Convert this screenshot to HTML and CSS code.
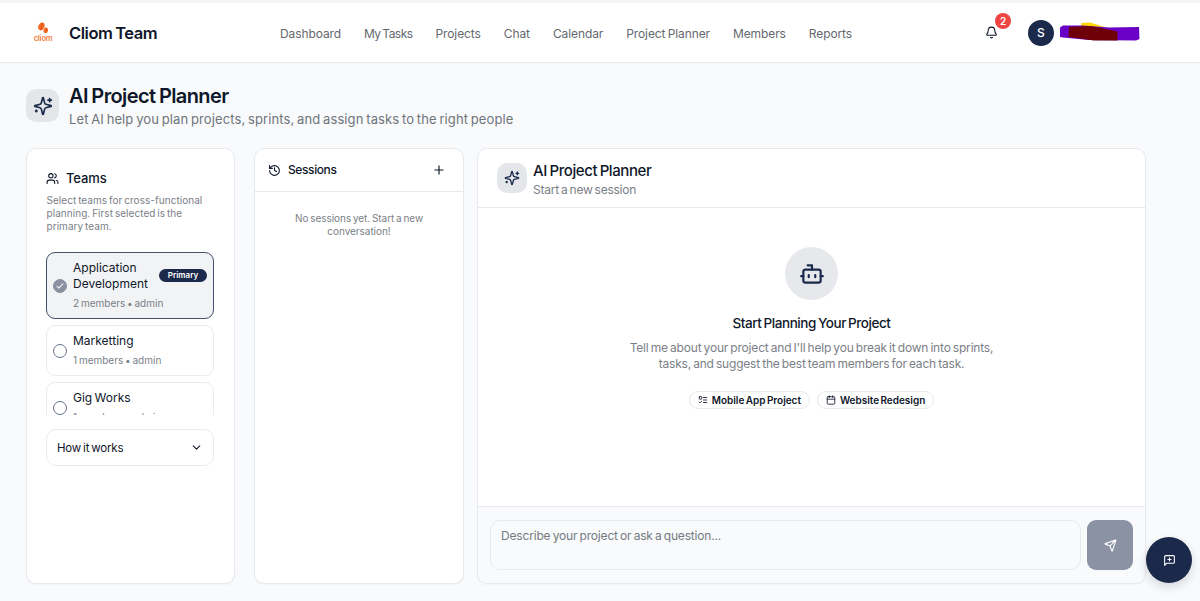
FILE: index.html
```html
<!DOCTYPE html>
<html lang="en">
<head>
    <meta charset="UTF-8">
    <meta name="viewport" content="width=device-width, initial-scale=1.0">
    <title>Cliom Team - AI Project Planner</title>
    <link rel="stylesheet" href="styles.css">
</head>
<body>
    <!-- icons used more than once -->
    <svg class="sprite" aria-hidden="true">
        <symbol id="sparkles" viewBox="0 0 24 24">
            <path d="M9.937 15.5A2 2 0 0 0 8.5 14.063l-6.135-1.582a.5.5 0 0 1 0-.962L8.5 9.936A2 2 0 0 0 9.937 8.5l1.582-6.135a.5.5 0 0 1 .963 0L14.063 8.5A2 2 0 0 0 15.5 9.937l6.135 1.581a.5.5 0 0 1 0 .964L15.5 14.063a2 2 0 0 0-1.437 1.437l-1.582 6.135a.5.5 0 0 1-.963 0z"/>
            <path d="M20 3v4M22 5h-4M4 17v2M5 18H3"/>
        </symbol>
    </svg>

    <header class="topbar">
        <div class="brand">
            <div class="logo">
                <svg class="logo-mark" viewBox="0 0 12 12">
                    <ellipse cx="4.4" cy="4.4" rx="3" ry="4" transform="rotate(25 4.4 4.4)"/>
                    <ellipse cx="8.8" cy="8.4" rx="2.2" ry="2.8" transform="rotate(15 8.8 8.4)"/>
                    <path d="M6 .8 3.4 8.2M9.6 6 8.2 11"/>
                </svg>
                <span class="logo-text">cliom</span>
            </div>
            <span class="brand-name">Cliom Team</span>
        </div>
        <nav class="nav">
            <a>Dashboard</a>
            <a class="nav-tasks">My Tasks</a>
            <a>Projects</a>
            <a>Chat</a>
            <a>Calendar</a>
            <a>Project Planner</a>
            <a>Members</a>
            <a>Reports</a>
        </nav>
        <div class="user">
            <div class="bell">
                <svg class="icon" viewBox="0 0 24 24"><path d="M10.268 21a2 2 0 0 0 3.464 0M3.262 15.326A1 1 0 0 0 4 17h16a1 1 0 0 0 .74-1.673C19.41 13.956 18 12.499 18 8A6 6 0 0 0 6 8c0 4.499-1.411 5.956-2.738 7.326"/></svg>
                <span class="bell-count">2</span>
            </div>
            <div class="avatar">S</div>
            <svg class="user-name" viewBox="0 0 82 20">
                <path d="M22 5 22.5 2 31 1.5 46 6 44 18 26 9z" fill="#ffd800"/>
                <path d="M1 6.5 4 4.5 24 4.5 50 6.5 80 6 80.5 18 77 19.5 30 19 4 16.500 1 16z" fill="#6a00c8"/>
                <path d="M10 6 31 5 47 8 58.500 10.500 58.500 19.500 35 19.500 9.500 16z" fill="#700008"/>
            </svg>
        </div>
    </header>

    <main class="page">
        <div class="page-head">
            <div class="icon-box"><svg class="icon"><use href="#sparkles"/></svg></div>
            <div>
                <h1>AI Project Planner</h1>
                <p class="page-sub">Let AI help you plan projects, sprints, and assign tasks to the right people</p>
            </div>
        </div>

        <div class="columns">
            <section class="card teams">
                <h2 class="teams-title">
                    <svg class="icon" viewBox="0 0 24 24"><path d="M16 21v-2a4 4 0 0 0-4-4H6a4 4 0 0 0-4 4v2M22 21v-2a4 4 0 0 0-3-3.870M16 3.130a4 4 0 0 1 0 7.750"/><circle cx="9" cy="7" r="4"/></svg>
                    Teams
                </h2>
                <p class="teams-desc">Select teams for cross-functional<br>planning. First selected is the<br>primary team.</p>
                <div class="team-list">
                    <div class="team selected">
                        <span class="radio"><svg viewBox="0 0 24 24"><path d="M20 6 9 17l-5-5"/></svg></span>
                        <div class="team-info">
                            <div class="team-name">Application Development</div>
                            <div class="team-meta">2 members • admin</div>
                        </div>
                        <span class="primary">Primary</span>
                    </div>
                    <div class="team">
                        <span class="radio"></span>
                        <div class="team-info">
                            <div class="team-name">Marketting</div>
                            <div class="team-meta">1 members • admin</div>
                        </div>
                    </div>
                    <div class="team">
                        <span class="radio"></span>
                        <div class="team-info">
                            <div class="team-name">Gig Works</div>
                            <div class="team-meta">1 members • admin</div>
                        </div>
                    </div>
                </div>
                <button class="how">
                    <span>How it works</span>
                    <svg class="icon" viewBox="0 0 24 24"><path d="m6 9 6 6 6-6"/></svg>
                </button>
            </section>

            <section class="card sessions">
                <div class="sessions-head">
                    <svg class="icon" viewBox="0 0 24 24"><path d="M3 12a9 9 0 1 0 9-9 9.750 9.750 0 0 0-6.740 2.740L3 8"/><path d="M3 3v5h5M12 7v5l4 2"/></svg>
                    <h2>Sessions</h2>
                    <svg class="icon plus" viewBox="0 0 24 24"><path d="M5 12h14M12 5v14"/></svg>
                </div>
                <p class="sessions-empty">No sessions yet. Start a new<br>conversation!</p>
            </section>

            <section class="card planner">
                <div class="planner-head">
                    <div class="icon-box small"><svg class="icon"><use href="#sparkles"/></svg></div>
                    <div class="planner-title">
                        <h2>AI Project Planner</h2>
                        <p>Start a new session</p>
                    </div>
                </div>
                <div class="planner-body">
                    <div class="bot">
                        <svg class="icon" viewBox="0 0 24 24"><path d="M12 8V4H8"/><rect x="4" y="8" width="16" height="12" rx="2"/><path d="M2 14h2M20 14h2M15 13v2M9 13v2"/></svg>
                    </div>
                    <h3>Start Planning Your Project</h3>
                    <p class="intro">Tell me about your project and I'll help you break it down into sprints,<br>tasks, and suggest the best team members for each task.</p>
                    <div class="chips">
                        <span class="chip">
                            <svg class="icon" viewBox="0 0 24 24"><rect x="3" y="4" width="6" height="6" rx="1"/><path d="m3 17 2 2 4-4M13 6h8M13 12h8M13 18h8"/></svg>
                            Mobile App Project
                        </span>
                        <span class="chip">
                            <svg class="icon" viewBox="0 0 24 24"><path d="M8 2v4M16 2v4M3 10h18"/><rect x="3" y="4" width="18" height="18" rx="2"/></svg>
                            Website Redesign
                        </span>
                    </div>
                </div>
                <div class="composer">
                    <textarea placeholder="Describe your project or ask a question..."></textarea>
                    <button class="send" aria-label="Send">
                        <svg class="icon" viewBox="0 0 24 24"><path d="M14.536 21.686a.5.5 0 0 0 .937-.024l6.500-19a.496.496 0 0 0-.635-.635l-19 6.500a.5.5 0 0 0-.024.937l7.930 3.180a2 2 0 0 1 1.112 1.110zM21.854 2.147l-10.940 10.939"/></svg>
                    </button>
                </div>
            </section>
        </div>
    </main>

    <button class="feedback" aria-label="Feedback">
        <svg class="icon" viewBox="0 0 24 24"><path d="M21 15a2 2 0 0 1-2 2H7l-4 4V5a2 2 0 0 1 2-2h14a2 2 0 0 1 2 2zM12 7v6M9 10h6"/></svg>
    </button>
</body>
</html>
```

FILE: styles.css
```css
* {
    box-sizing: border-box;
    margin: 0;
    padding: 0;
}

body {
    font-family: Inter, "Liberation Sans", sans-serif;
    word-spacing: -1px;
    height: 601px;
    overflow: hidden;
    background: #f8fafc;
    color: #0f172a;
    border-top: 3px solid #f5f5f6;
}

button,
textarea {
    font-family: inherit;
    word-spacing: inherit;
    color: inherit;
}

.sprite {
    display: none;
}

.icon {
    display: block;
    flex: none;
    width: 13px;
    height: 13px;
    fill: none;
    stroke: currentColor;
    stroke-width: 2;
    stroke-linecap: round;
    stroke-linejoin: round;
}

/* top bar */
.topbar {
    display: flex;
    align-items: center;
    height: 60px;
    padding-left: 33px;
    background: #fff;
    border-bottom: 1px solid #e8eaed;
}

.brand {
    display: flex;
    align-items: center;
    width: 247px;
}

.logo {
    display: flex;
    flex-direction: column;
    align-items: center;
    width: 20px;
    margin-right: 16px;
}

.logo-mark {
    width: 12px;
    height: 12px;
    fill: #f26a21;
}

.logo-mark path {
    fill: none;
    stroke: #d9480f;
    stroke-width: 0.6;
}

.logo-text {
    font-size: 7.5px;
    line-height: 9px;
    font-weight: 600;
    letter-spacing: -0.2px;
    color: #f4793b;
}

.brand-name {
    font-size: 16.5px;
    font-weight: 600;
    letter-spacing: -0.45px;
}

.nav {
    display: flex;
    gap: 23px;
    width: 699px;
    padding-top: 2px;
    font-size: 12px;
    letter-spacing: -0.1px;
    color: #64696f;
    white-space: nowrap;
}

.nav-tasks {
    letter-spacing: -0.55px;
}

.user {
    display: flex;
    align-items: center;
}

.bell {
    position: relative;
    width: 49px;
    padding-left: 6px;
}

.bell-count {
    position: absolute;
    top: -13px;
    left: 16px;
    width: 16px;
    height: 16px;
    border-radius: 50%;
    background: #ef4444;
    color: #fff;
    font-size: 10px;
    font-weight: 600;
    line-height: 16px;
    text-align: center;
}

.avatar {
    width: 26px;
    height: 26px;
    border-radius: 50%;
    background: #1b294b;
    color: #fff;
    font-size: 12px;
    font-weight: 500;
    line-height: 26px;
    text-align: center;
}

.user-name {
    width: 82px;
    height: 20px;
    margin: -3px 0 0 5px;
}

/* page heading */
.page {
    padding: 22px 54px 0 26px;
}

.page-head {
    display: flex;
    height: 63px;
    gap: 10px;
}

.icon-box {
    display: flex;
    align-items: center;
    justify-content: center;
    width: 33px;
    height: 33px;
    margin-top: 4px;
    border-radius: 10px;
    background: #e4e6ea;
    color: #1b294b;
}

.icon-box .icon {
    width: 20px;
    height: 20px;
}

h1 {
    font-size: 20px;
    line-height: 23px;
    font-weight: 600;
    letter-spacing: -0.6px;
}

.page-sub {
    margin-top: 2px;
    font-size: 13px;
    line-height: 18px;
    letter-spacing: 0.1px;
    color: #6f747b;
    white-space: nowrap;
}

/* columns */
.columns {
    display: grid;
    grid-template-columns: 209px 210px 1fr;
    height: 436px;
}

.card {
    background: #fff;
    border: 1px solid #e7e9ed;
    border-radius: 10px;
    box-shadow: 0 1px 2px rgba(15, 23, 42, 0.04);
    overflow: hidden;
}

.sessions {
    margin-left: 19px;
    margin-right: -19px;
}

.planner {
    display: flex;
    flex-direction: column;
    margin-left: 32px;
}

.teams {
    padding: 19px 20px 19px 19px;
}

.teams-title {
    display: flex;
    align-items: center;
    gap: 7px;
    height: 20px;
    font-size: 13px;
    font-weight: 500;
    letter-spacing: -0.1px;
}

.teams-desc {
    margin-top: 6px;
    padding-left: 0.5px;
    font-size: 10px;
    line-height: 13px;
    letter-spacing: 0.05px;
    color: #7b8087;
}

.team-list {
    height: 163px;
    margin-top: 19px;
    overflow: hidden;
}

.team {
    display: flex;
    align-items: center;
    height: 51px;
    margin-bottom: 6px;
    padding: 0 6px;
    border: 1px solid #e9ebef;
    border-radius: 9px;
}

.team.selected {
    height: 67px;
    background: #f2f3f5;
    border-color: #454f6b;
}

.radio {
    flex: none;
    width: 14px;
    height: 14px;
    margin-right: 6px;
    border: 1px solid #66708a;
    border-radius: 50%;
}

.selected .radio {
    background: #8b91a1;
    border-color: #8b91a1;
}

.radio svg {
    display: block;
    width: 10px;
    height: 10px;
    margin: 1px;
    fill: none;
    stroke: #fff;
    stroke-width: 2.5;
}

.team-info {
    flex: 1;
    min-width: 0;
    padding-bottom: 2px;
}

.team-name {
    font-size: 12px;
    line-height: 16px;
}

.team-meta {
    margin-top: 5px;
    font-size: 10px;
    line-height: 13px;
    color: #7b8087;
    white-space: nowrap;
}

.primary {
    flex: none;
    width: 48px;
    height: 13px;
    margin-bottom: 20px;
    border-radius: 7px;
    background: #1b294b;
    color: #fff;
    font-size: 8px;
    font-weight: 600;
    line-height: 13px;
    text-align: center;
}

.how {
    display: flex;
    align-items: center;
    justify-content: space-between;
    width: 168px;
    height: 37px;
    margin-top: 14px;
    padding: 0 10px;
    background: #fff;
    border: 1px solid #e9ebef;
    border-radius: 10px;
    font-size: 11.5px;
    letter-spacing: -0.2px;
}

/* sessions */
.sessions-head {
    display: flex;
    align-items: center;
    gap: 7px;
    height: 43px;
    padding: 0 17px 0 13px;
    border-bottom: 1px solid #e7e9ed;
}

.sessions-head h2 {
    flex: 1;
    padding-bottom: 1px;
    font-size: 12px;
    font-weight: 500;
    letter-spacing: -0.4px;
}

.sessions-head .plus {
    width: 14px;
    height: 14px;
}

.sessions-empty {
    margin-top: 20px;
    font-size: 10px;
    line-height: 13px;
    letter-spacing: -0.04px;
    text-align: center;
    color: #7b8087;
}

/* planner */
.planner-head {
    display: flex;
    align-items: center;
    gap: 6px;
    height: 59px;
    padding-left: 19px;
    border-bottom: 1px solid #e7e9ed;
}

.planner-title {
    padding-top: 3px;
}

.icon-box.small {
    width: 30px;
    height: 30px;
    margin: 0;
}

.small .icon {
    width: 16px;
    height: 16px;
}

.planner-head h2 {
    font-size: 15px;
    line-height: 19px;
    font-weight: 500;
    letter-spacing: -0.42px;
}

.planner-head p {
    margin-top: 1px;
    font-size: 12px;
    line-height: 18px;
    letter-spacing: -0.25px;
    color: #7b8087;
}

.planner-body {
    display: flex;
    flex-direction: column;
    align-items: center;
    height: 298px;
    padding-top: 39px;
}

.bot {
    display: flex;
    align-items: center;
    justify-content: center;
    width: 53px;
    height: 53px;
    border-radius: 50%;
    background: #e7e8ec;
    color: #1b294b;
}

.bot .icon {
    width: 26px;
    height: 26px;
}

h3 {
    margin-top: 13px;
    font-size: 13.5px;
    line-height: 20px;
    font-weight: 500;
    letter-spacing: -0.45px;
}

.intro {
    margin-top: 7px;
    font-size: 12px;
    line-height: 16px;
    letter-spacing: -0.19px;
    text-align: center;
    color: #7b8087;
    white-space: nowrap;
}

.chips {
    display: flex;
    gap: 7px;
    margin-top: 19px;
}

.chip {
    display: flex;
    align-items: center;
    gap: 4px;
    height: 18px;
    padding: 0 8px;
    border: 1px solid #e7e9ed;
    border-radius: 10px;
    font-size: 10px;
    font-weight: 600;
    letter-spacing: -0.03px;
    white-space: nowrap;
}

.chip .icon {
    width: 10px;
    height: 10px;
}

.composer {
    display: flex;
    gap: 6px;
    flex: 1;
    padding: 13px 12px 0 12px;
    background: #f8fafc;
    border-top: 1px solid #e7e9ed;
}

.composer textarea {
    flex: 1;
    height: 50px;
    padding: 6px 10px;
    resize: none;
    background: #f8fafc;
    border: 1px solid #e7e9ed;
    border-radius: 10px;
    font-size: 12px;
    line-height: 17px;
    letter-spacing: -0.17px;
}

.composer textarea::placeholder {
    color: #757a81;
}

.send {
    display: flex;
    align-items: center;
    justify-content: center;
    width: 46px;
    height: 50px;
    background: #8b92a4;
    border: none;
    border-radius: 9px;
    color: #fff;
}

.feedback {
    position: fixed;
    left: 1146px;
    top: 537px;
    display: flex;
    align-items: center;
    justify-content: center;
    width: 46px;
    height: 46px;
    background: #1b294b;
    border: none;
    border-radius: 50%;
    box-shadow: 0 4px 10px rgba(15, 23, 42, 0.15);
    color: #fff;
}
```
